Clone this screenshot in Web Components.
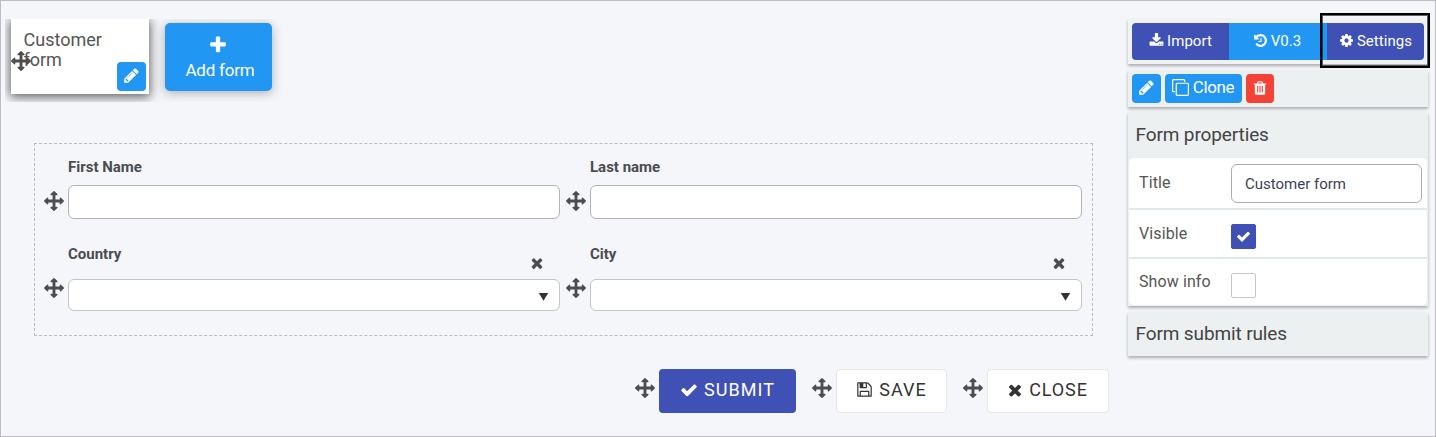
<!DOCTYPE html>
<html lang="en">
<head>
<meta charset="utf-8">
<title>Form designer</title>
<style>
html,body{margin:0;height:100%}
body{font-family:Roboto,"Liberation Sans",sans-serif;color:#4a4a4a;background:#f5f6fa;overflow:hidden}
</style>
</head>
<body>
<form-designer></form-designer>
<script>
const ICONS={
arrows:"M1792 896q0 26-19 45l-256 256q-19 19-45 19t-45-19-19-45v-128h-384v384h128q26 0 45 19t19 45-19 45l-256 256q-19 19-45 19t-45-19l-256-256q-19-19-19-45t19-45 45-19h128v-384h-384v128q0 26-19 45t-45 19-45-19l-256-256q-19-19-19-45t19-45l256-256q19-19 45-19t45 19 19 45v128h384v-384h-128q-26 0-45-19t-19-45 19-45l256-256q19-19 45-19t45 19l256 256q19 19 19 45t-19 45-45 19h-128v384h384v-128q0-26 19-45t45-19 45 19l256 256q19 19 19 45z",
plus:"M1600 736v192q0 40-28 68t-68 28h-416v416q0 40-28 68t-68 28h-192q-40 0-68-28t-28-68v-416h-416q-40 0-68-28t-28-68v-192q0-40 28-68t68-28h416v-416q0-40 28-68t68-28h192q40 0 68 28t28 68v416h416q40 0 68 28t28 68z",
pencil:"M491 1536l91-91-235-235-91 91v107h128v128h107zm523-928q0-22-22-22-10 0-17 7l-542 542q-7 7-7 17 0 22 22 22 10 0 17-7l542-542q7-7 7-17zm-54-192l416 416-832 832h-416v-416zm683 96q0 53-37 90l-166 166-416-416 166-165q36-38 90-38 53 0 91 38l235 234q37 39 37 91z",
download:"M1344 1344q0-26-19-45t-45-19-45 19-19 45 19 45 45 19 45-19 19-45zm256 0q0-26-19-45t-45-19-45 19-19 45 19 45 45 19 45-19 19-45zm128-224v320q0 40-28 68t-68 28h-1472q-40 0-68-28t-28-68v-320q0-40 28-68t68-28h465l135 136q58 56 136 56t136-56l136-136h464q40 0 68 28t28 68zm-325-569q17 41-14 70l-448 448q-18 19-45 19t-45-19l-448-448q-31-29-14-70 17-39 59-39h256v-448q0-26 19-45t45-19h256q26 0 45 19t19 45v448h256q42 0 59 39z",
history:"M1664 896q0 156-61 298t-164 245-245 164-298 61q-172 0-327-72.5t-264-204.5q-7-10-6.5-22.5t8.5-20.5l137-138q10-9 25-9 16 2 23 12 73 95 179 147t225 52q104 0 198.5-40.5t163.5-109.5 109.5-163.5 40.5-198.5-40.5-198.5-109.5-163.5-163.5-109.5-198.5-40.5q-98 0-188 35.5t-160 101.5l137 138q31 30 14 69-17 40-59 40h-448q-26 0-45-19t-19-45v-448q0-42 40-59 39-17 69 14l130 129q107-101 244.5-156.5t284.5-55.5q156 0 298 61t245 164 164 245 61 298zm-640-288v448q0 14-9 23t-23 9h-320q-14 0-23-9t-9-23v-64q0-14 9-23t23-9h224v-352q0-14 9-23t23-9h64q14 0 23 9t9 23z",
cog:"M1152 896q0-106-75-181t-181-75-181 75-75 181 75 181 181 75 181-75 75-181zm512-109v222q0 12-8 23t-20 13l-185 28q-19 54-39 91 35 50 107 138 10 12 10 25t-9 23q-27 37-99 108t-94 71q-12 0-26-9l-138-108q-44 23-91 38-16 136-29 186-7 28-36 28h-222q-14 0-24.5-8.5t-11.5-21.5l-28-184q-49-16-90-37l-141 107q-10 9-25 9-14 0-25-11-126-114-165-168-7-10-7-23 0-12 8-23 15-21 51-66.5t54-70.5q-27-50-41-99l-183-27q-13-2-21-12.5t-8-23.5v-222q0-12 8-23t19-13l186-28q14-46 39-92-40-57-107-138-10-12-10-24 0-10 9-23 26-36 98.500-107.500t94.500-71.500q13 0 26 10l138 107q44-23 91-38 16-136 29-186 7-28 36-28h222q14 0 24.500 8.500t11.500 21.500l28 184q49 16 90 37l142-107q9-9 24-9 13 0 25 10 129 119 165 170 7 8 7 22 0 12-8 23-15 21-51 66.500t-54 70.500q26 50 41 98l183 28q13 2 21 12.500t8 23.500z",
trash:"M704 1376v-704q0-14-9-23t-23-9h-64q-14 0-23 9t-9 23v704q0 14 9 23t23 9h64q14 0 23-9t9-23zm256 0v-704q0-14-9-23t-23-9h-64q-14 0-23 9t-9 23v704q0 14 9 23t23 9h64q14 0 23-9t9-23zm256 0v-704q0-14-9-23t-23-9h-64q-14 0-23 9t-9 23v704q0 14 9 23t23 9h64q14 0 23-9t9-23zm-544-992h448l-48-117q-7-9-17-11h-317q-10 2-17 11zm928 32v64q0 14-9 23t-23 9h-96v948q0 83-47 143.5t-113 60.5h-832q-66 0-113-58.5t-47-141.5v-952h-96q-14 0-23-9t-9-23v-64q0-14 9-23t23-9h309l70-167q15-37 54-63t79-26h320q40 0 79 26t54 63l70 167h309q14 0 23 9t9 23z",
check:"M1671 566q0 40-28 68l-724 724-136 136q-28 28-68 28t-68-28l-136-136-362-362q-28-28-28-68t28-68l136-136q28-28 68-28t68 28l294 295 656-657q28-28 68-28t68 28l136 136q28 28 28 68z",
times:"M1490 1322q0 40-28 68l-136 136q-28 28-68 28t-68-28l-294-294-294 294q-28 28-68 28t-68-28l-136-136q-28-28-28-68t28-68l294-294-294-294q-28-28-28-68t28-68l136-136q28-28 68-28t68 28l294 294 294-294q28-28 68-28t68 28l136 136q28 28 28 68t-28 68l-294 294 294 294q28 28 28 68z",
floppy:"M512 1536h768v-384h-768v384zm896 0h128v-896q0-14-10-38.5t-20-34.5l-281-281q-10-10-34-20t-39-10v416q0 40-28 68t-68 28h-576q-40 0-68-28t-28-68v-416h-128v1280h128v-416q0-40 28-68t68-28h832q40 0 68 28t28 68v416zm-384-928v-320q0-13-9.5-22.5t-22.5-9.5h-192q-13 0-22.500 9.500t-9.500 22.500v320q0 13 9.500 22.500t22.500 9.500h192q13 0 22.500-9.500t9.500-22.500zm640 32v928q0 40-28 68t-68 28h-1344q-40 0-68-28t-28-68v-1344q0-40 28-68t68-28h928q40 0 88 20t76 48l280 280q28 28 48 76t20 88z",
clone:"M1664 1632v-1088q0-13-9.5-22.5t-22.5-9.5h-1088q-13 0-22.500 9.500t-9.500 22.500v1088q0 13 9.500 22.500t22.500 9.500h1088q13 0 22.500-9.500t9.500-22.500zm128-1088v1088q0 66-47 113t-113 47h-1088q-66 0-113-47t-47-113v-1088q0-66 47-113t113-47h1088q66 0 113 47t47 113zm-384-384v160h-128v-160q0-13-9.500-22.500t-22.500-9.500h-1088q-13 0-22.500 9.500t-9.500 22.500v1088q0 13 9.500 22.500t22.500 9.500h160v128h-160q-66 0-113-47t-47-113v-1088q0-66 47-113t113-47h1088q66 0 113 47t47 113z",
caret:"M128 320h1536l-768 1250z"
};
function define(name,html){
  customElements.define(name,class extends HTMLElement{
    constructor(){super();this.attachShadow({mode:'open'})}
    connectedCallback(){
      this.shadowRoot.innerHTML='<style>*{box-sizing:border-box}:host{box-sizing:border-box}</style>'+(typeof html==='function'?html(this):html);
    }
  });
}
define('fd-icon',el=>`<style>:host{display:block;flex:none;width:${el.getAttribute('size')}px;height:${el.getAttribute('size')}px}svg{display:block;width:100%;height:100%;fill:currentColor}</style><svg viewBox="0 0 1792 1792"><path d="${ICONS[el.getAttribute('name')]}"/></svg>`);

define('fd-button',`<style>
:host{display:flex;align-items:center;justify-content:center;background:#2196f3;color:#fff;border-radius:4px;white-space:nowrap}
</style><slot></slot>`);

define('form-tabs',`<style>
:host{display:flex;width:290px;height:83px;overflow:hidden;padding-left:6px}
.card{position:relative;width:138px;height:75px;background:#fff;box-shadow:0 2px 10px 1px rgba(0,0,0,.62);padding:11px 12.500px;font-size:18px;line-height:20px;color:#555}
.move{position:absolute;left:0;top:32px;color:#4b4d50}
.edit{position:absolute;right:3px;bottom:3px;width:29px;height:29px}
.add{flex-direction:column;justify-content:flex-start;margin:4px 0 0 16px;width:107px;height:68px;padding:12px 0 0 3px;font-size:17px;letter-spacing:-.2px;border-radius:5px;box-shadow:0 2px 11px rgba(0,0,0,.3)}
.add span{line-height:20px;margin-top:5px}
.add fd-icon{margin-left:-4px}
</style>
<div class="card">Customer<br>form<fd-icon class="move" name="arrows" size="20"></fd-icon><fd-button class="edit"><fd-icon name="pencil" size="17" style="margin-top:-2px"></fd-icon></fd-button></div>
<fd-button class="add"><fd-icon name="plus" size="20"></fd-icon><span>Add form</span></fd-button>`);

define('form-field',el=>{const sel=el.hasAttribute('select');return `<style>
:host{display:grid;grid-template-columns:24px 492px;width:516px;align-content:start}
label{display:block;font-size:15px;font-weight:700;line-height:20px;color:#4a4c50;height:${sel?35:28}px}
.handle{color:#4b4d50;padding-top:${sel?0:6}px;margin-top:${sel?-1:0}px}
.box{height:${sel?32:34}px;border:1px solid ${sel?'#c4c4c8':'#b2b2b8'};border-radius:6px;background:#fff;display:flex;justify-content:flex-end;align-items:center;padding:2px 10px 0 0;color:#333}
.clear{position:absolute;right:15px;top:11px;color:#4b4d50}
.wrap{position:relative;grid-column:2}
</style><div class="wrap"><label><slot></slot></label>${sel?'<fd-icon class="clear" name="times" size="16"></fd-icon>':''}</div>
<div class="handle"><fd-icon name="arrows" size="20"></fd-icon></div>
<div class="box">${sel?'<fd-icon name="caret" size="11"></fd-icon>':''}</div>`});

define('form-canvas',`<style>
:host{display:grid;grid-template-columns:516px 516px;column-gap:6px;grid-template-rows:87px auto;width:1059px;height:193px;padding:13px 0 0 9px;border:1px dashed #bcbdc3}
</style><slot></slot>`);

define('form-actions',`<style>
:host{display:flex;padding-left:634px}
.item{display:flex;gap:4px;color:#4b4d50}
.item>fd-icon{margin-top:9px}
.a{margin-right:16px}
fd-button{height:44px;font-size:18px;letter-spacing:1.05px;border-radius:4px;gap:6px;padding-bottom:3px}
.white{background:#fff;color:#333;border:1px solid #e6e6e9}
</style>
<div class="item a"><fd-icon name="arrows" size="20"></fd-icon><fd-button style="width:137px;background:#3f51b5;gap:6px"><fd-icon name="check" size="18"></fd-icon>SUBMIT</fd-button></div>
<div class="item a"><fd-icon name="arrows" size="20"></fd-icon><fd-button class="white" style="width:111px"><fd-icon name="floppy" size="17"></fd-icon>SAVE</fd-button></div>
<div class="item"><fd-icon name="arrows" size="20"></fd-icon><fd-button class="white" style="width:122px;gap:5px;letter-spacing:.9px;padding-right:2px"><fd-icon name="times" size="18"></fd-icon>CLOSE</fd-button></div>`);

define('main-toolbar',`<style>
:host{display:flex;position:relative;height:45px;padding:4px;background:#f1f2f4;box-shadow:0 2px 3px rgba(0,0,0,.3)}
fd-button{width:97px;height:37px;font-size:15px;border-radius:0;gap:3px;letter-spacing:.05px;padding-bottom:2px}
.i{background:#3f51b5}
.focus{position:absolute;left:192px;top:-6px;width:110px;height:55px;border:2px solid #000;box-shadow:inset 0 0 0 1px rgba(0,0,0,.6)}
</style>
<fd-button class="i" style="border-radius:4px 0 0 4px"><fd-icon name="download" size="15"></fd-icon>Import</fd-button>
<fd-button style="width:98px;padding-right:2px"><fd-icon name="history" size="15"></fd-icon>V0.3</fd-button>
<fd-button class="i" style="border-radius:0 4px 4px 0"><fd-icon name="cog" size="15"></fd-icon>Settings</fd-button>
<div class="focus"></div>`);

define('item-toolbar',`<style>
:host{display:flex;gap:4px;height:37px;margin-top:6px;padding:4px;background:#ecf0f1;box-shadow:0 2px 3px rgba(0,0,0,.3)}
fd-button{height:29px;font-size:17px;padding-bottom:2px}
</style>
<fd-button style="width:29px"><fd-icon name="pencil" size="17"></fd-icon></fd-button>
<fd-button style="width:77px;gap:4px;letter-spacing:-.35px;padding-right:1px"><fd-icon name="clone" size="17"></fd-icon><span style="margin-top:-1px">Clone</span></fd-button>
<fd-button style="width:28px;background:#f44336"><fd-icon name="trash" size="16"></fd-icon></fd-button>`);

define('prop-panel',el=>`<style>
:host{display:block;background:#ecf0f1;box-shadow:0 2px 3px rgba(0,0,0,.3);color:#444}
.head{height:${el.getAttribute('head')}px;line-height:${el.getAttribute('head')}px;padding-left:7.500px;font-size:19px;letter-spacing:-.12px}
.body{display:flex;flex-direction:column;gap:2px;margin:0 1px;background:#e1e8e8;border-radius:5px;overflow:hidden}
</style><div class="head">${el.getAttribute('title-text')}</div><div class="body"><slot></slot></div>`);

define('prop-row',el=>`<style>
:host{display:grid;grid-template-columns:102px 1fr;background:#fff}
.l{font-size:16px;line-height:20px;padding:var(--label-top,14px) 0 0 10px;color:#555;letter-spacing:.1px;white-space:nowrap}
</style><div class="l">${el.getAttribute('label')}</div><div><slot></slot></div>`);

define('text-box',`<style>:host{display:block;width:191px;height:39px;margin-top:6px;border:1px solid #aaabb3;border-radius:6px;line-height:38px;padding-left:13px;font-size:15px;color:#3c4257}</style><slot></slot>`);
define('check-box',el=>`<style>:host{display:grid;place-items:center;width:25px;height:25px;margin-top:14px;border:1px solid ${el.hasAttribute('on')?'#3f51b5':'#c6c6c6'};background:${el.hasAttribute('on')?'#3f51b5':'#fff'};color:#fff;border-radius:2px}</style>${el.hasAttribute('on')?'<fd-icon name="check" size="15"></fd-icon>':''}`);

define('form-designer',`<style>
:host{display:grid;grid-template-columns:1123px 300px;width:1436px;height:437px;border:1px solid #bcbcc2;padding:18px 0 0 4px;background:#f5f6fa}
form-canvas{margin:41px 0 33px 29px}
form-actions{margin-left:-4px}
</style>
<main><form-tabs></form-tabs>
<form-canvas>
<form-field>First Name</form-field><form-field>Last name</form-field>
<form-field select>Country</form-field><form-field select>City</form-field>
</form-canvas>
<form-actions></form-actions></main>
<aside><main-toolbar></main-toolbar><item-toolbar></item-toolbar>
<prop-panel head="46" title-text="Form properties" style="margin-top:5px;height:194px">
<prop-row label="Title" style="height:50px;--label-top:15px"><text-box>Customer form</text-box></prop-row>
<prop-row label="Visible" style="height:47px"><check-box on></check-box></prop-row>
<prop-row label="Show info" style="height:46px;--label-top:13px"><check-box></check-box></prop-row>
</prop-panel>
<prop-panel head="44" title-text="Form submit rules" style="margin-top:6px;height:44px"></prop-panel></aside>`);
</script>
</body>
</html>
